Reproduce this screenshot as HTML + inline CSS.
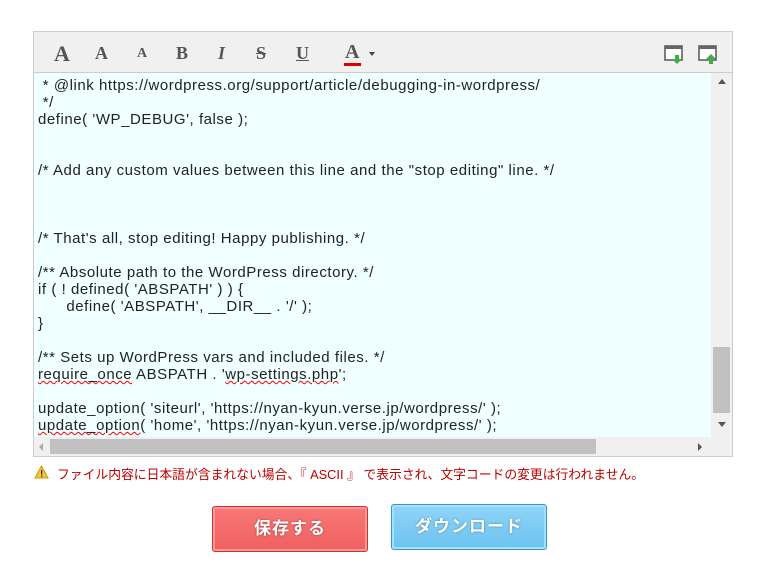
<!DOCTYPE html><html><head><meta charset="utf-8"><style>
body{margin:0;width:763px;height:563px;background:#fff;position:relative;font-family:"Liberation Sans","Noto Sans CJK JP",sans-serif;overflow:hidden}
#ed{position:absolute;left:33px;top:31px;width:698px;height:424px;border:1px solid #ccc;background:#f0f0f0}
#tb{position:absolute;left:0;top:0;width:698px;height:40px;border-bottom:1px solid #ccc;background:#f0f0f0}
.t{position:absolute;top:9px;font-family:"Liberation Serif",serif;font-weight:bold;color:#555}
#ta{position:absolute;left:0;top:41px;width:677px;height:364px;background:#f0ffff;overflow:hidden}
#ta pre{margin:0;padding:4px 0 0 4px;font-family:"Liberation Sans",sans-serif;font-size:15px;letter-spacing:0.55px;line-height:17px;color:#222;white-space:pre;tab-size:6}
#vs{position:absolute;left:677px;top:41px;width:21px;height:364px;background:#f0f0f0}
#hs{position:absolute;left:0;top:405px;width:677px;height:19px;background:#f0f0f0}
.sq{text-decoration:underline wavy red;text-decoration-thickness:1px}
.btn{position:absolute;width:154px;height:44px;border-radius:3px;color:#fff;font-weight:bold;font-size:17px;text-align:center;line-height:44px;text-shadow:0 0 2px rgba(0,0,0,.4);letter-spacing:1px}
</style></head><body>
<div id="ed">
<div id="tb">
<span class="t" style="left:20px;font-size:22px">A</span>
<span class="t" style="left:61px;top:11px;font-size:18px">A</span>
<span class="t" style="left:103px;top:14px;font-size:14px">A</span>
<span class="t" style="left:142px;top:11px;font-size:18px">B</span>
<span class="t" style="left:184px;top:11px;font-size:18px;font-style:italic">I</span>
<span class="t" style="left:222px;top:11px;font-size:18px;text-decoration:line-through">S</span>
<span class="t" style="left:262px;top:11px;font-size:18px;text-decoration:underline">U</span>
<span class="t" style="left:311px;top:9px;font-size:20px">A</span>
<div style="position:absolute;left:310px;top:31px;width:17px;height:3px;background:#d00"></div>
<div style="position:absolute;left:335px;top:20px;border:3px solid transparent;border-top:4px solid #444"></div>
<svg style="position:absolute;left:630px;top:13px" width="22" height="22"><rect x="1" y="1" width="17" height="14" fill="#fff" stroke="#555" stroke-width="1.5"/><rect x="1" y="1" width="17" height="3" fill="#666"/><path d="M11 10h4v4h3l-5 5-5-5h3z" fill="#4a4"/></svg>
<svg style="position:absolute;left:664px;top:13px" width="22" height="22"><rect x="1" y="1" width="17" height="14" fill="#fff" stroke="#555" stroke-width="1.5"/><rect x="1" y="1" width="17" height="3" fill="#666"/><path d="M13 9l5 5h-3v5h-4v-5h-3z" fill="#4a4"/></svg>
</div>
<div id="ta"><pre> * @link https://wordpress.org/support/article/debugging-in-wordpress/
 */
define( 'WP_DEBUG', false );


/* Add any custom values between this line and the "stop editing" line. */



/* That's all, stop editing! Happy publishing. */

/** Absolute path to the WordPress directory. */
if ( ! defined( 'ABSPATH' ) ) {
	define( 'ABSPATH', __DIR__ . '/' );
}

/** Sets up WordPress vars and included files. */
<span class="sq">require_once</span> ABSPATH . '<span class="sq">wp-settings.php</span>';

update_option( 'siteurl', 'https://nyan-kyun.verse.jp/wordpress/' );
<span class="sq">update_option</span>( 'home', 'https://nyan-kyun.verse.jp/wordpress/' );</pre></div>
<div id="vs"><div style="position:absolute;left:7px;top:6px;border:4px solid transparent;border-bottom:5px solid #555;border-top:0"></div>
<div style="position:absolute;left:2px;top:274px;width:17px;height:66px;background:#c1c1c1"></div>
<div style="position:absolute;left:7px;top:349px;border:4px solid transparent;border-top:5px solid #555;border-bottom:0"></div></div>
<div id="hs"><div style="position:absolute;left:5px;top:6px;border:4px solid transparent;border-right:4px solid #aaa;border-left:0"></div>
<div style="position:absolute;left:16px;top:2px;width:546px;height:15px;background:#c1c1c1"></div>
<div style="position:absolute;left:664px;top:6px;border:4px solid transparent;border-left:4px solid #555;border-right:0"></div></div>
</div>
<svg style="position:absolute;left:34px;top:465px" width="15" height="14"><path d="M7.5 1L14 13H1z" fill="#f5c542" stroke="#c90" stroke-width="1"/><rect x="7" y="5" width="1.3" height="4.5" fill="#333"/><rect x="7" y="10.5" width="1.3" height="1.3" fill="#333"/></svg>
<div style="position:absolute;left:57px;top:464px;font-size:12.8px;color:#b00;white-space:nowrap">ファイル内容に日本語が含まれない場合、『 ASCII 』 で表示され、文字コードの変更は行われません。</div>
<div class="btn" style="left:212px;top:506px;background:linear-gradient(#f87878,#f06060);border:1px solid #c33;box-shadow:inset 0 0 0 2px #f99">保存する</div>
<div class="btn" style="left:391px;top:504px;background:linear-gradient(#8fd4f8,#6cc3f0);border:1px solid #39c;box-shadow:inset 0 0 0 2px #a8e0fb">ダウンロード</div>
</body></html>
